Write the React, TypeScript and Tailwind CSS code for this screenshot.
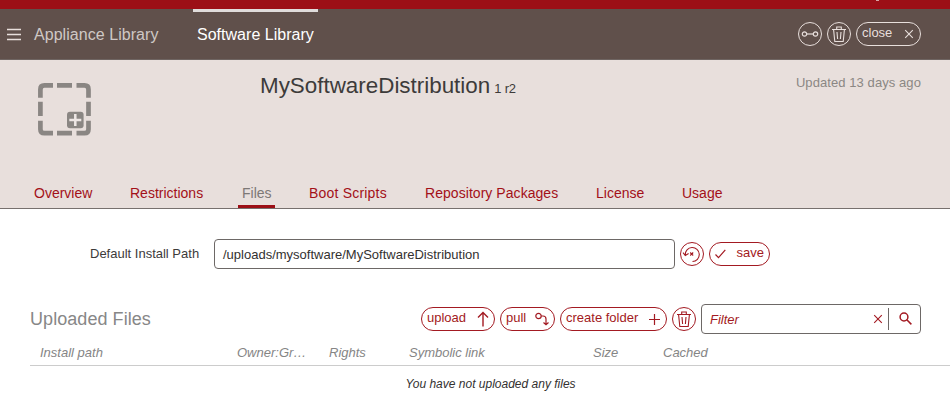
import type { ReactNode } from 'react';

const tabs = [
  { name: 'Overview', width: 'w-[66px]' },
  { name: 'Restrictions', width: 'w-[82px]' },
  { name: 'Files', width: 'w-[37px]' },
  { name: 'Boot Scripts', width: 'w-[86px] tracking-[0.2px]' },
  { name: 'Repository Packages', width: 'w-[141px] tracking-[0.05px]' },
  { name: 'License', width: 'w-[56px]' },
  { name: 'Usage', width: 'w-[48px]' },
];

function TrashIcon() {
  return (
    <svg width="16" height="18" viewBox="0 0 16 18" fill="none" stroke="currentColor" strokeWidth="1.1">
      <path d="M1 4.500h14M5.700 4.500V2h4.600v2.500M2.600 4.700l1.200 11.800h8.400l1.200-11.800M6 7l.6 7M10 7l-.6 7" />
    </svg>
  );
}

function CrossIcon() {
  return (
    <svg width="10" height="10" viewBox="0 0 10 10" fill="none" stroke="currentColor" strokeWidth="1.1">
      <path d="M1.200 1.200l7.600 7.600M8.800 1.200L1.200 8.800" />
    </svg>
  );
}

function Round({ children }: { children: ReactNode }) {
  return (
    <button className="flex h-6 w-6 shrink-0 items-center justify-center rounded-full border border-current">
      {children}
    </button>
  );
}

function Pill({ className, label, children }: { className: string; label: string; children: ReactNode }) {
  return (
    <button
      className={`flex h-6 shrink-0 items-center justify-between rounded-full border border-current text-[13px] leading-4 ${className}`}
    >
      <span className="pb-[3px]">{label}</span>
      {children}
    </button>
  );
}

export default function App() {
  return (
    <div className="h-[410px] w-[950px] overflow-hidden bg-white font-['Liberation_Sans',Arial,sans-serif] text-[13px] text-[#3d3b3a]">
      <div className="flex h-[9px] justify-end bg-[#9c0f16] pr-[71px]">
        <div className="h-px w-[3px] bg-[#d9a5a5]" />
      </div>
      <header className="flex h-[51px] items-start border-b border-[#6f6562] bg-[#60504b] text-[#e8dfdc]">
        <svg className="mt-[19px] ml-[7px] shrink-0" width="14" height="13" viewBox="0 0 14 13" stroke="currentColor" strokeWidth="1.700">
          <path d="M0 1.500h14M0 6.500h14M0 11.500h14" />
        </svg>
        <nav className="flex text-[16px] leading-[18px]">
          <a className="ml-[13px] w-[125px] pt-[17px] tracking-[0.050px] whitespace-nowrap text-[#cfc8c5]">Appliance Library</a>
          <a className="ml-[34px] w-[125px] border-t-[3px] border-[#e0dcdb] pt-[14px] pl-1 tracking-[0.020px] whitespace-nowrap text-white">
            Software Library
          </a>
        </nav>
        <div className="mt-[13px] mr-[29px] ml-auto flex gap-[5px]">
          <Round>
            <svg width="18" height="8" viewBox="0 0 18 8" fill="none" stroke="currentColor" strokeWidth="1.200">
              <circle cx="3.500" cy="4" r="2.200" />
              <circle cx="14.500" cy="4" r="2.200" />
              <path d="M5.700 4h6.600" />
            </svg>
          </Round>
          <Round><TrashIcon /></Round>
          <Pill className="w-[65px] pr-[6px] pl-[5px]" label="close"><CrossIcon /></Pill>
        </div>
      </header>

      <section className="flex h-[149px] flex-col justify-between border-b border-[#77706e] bg-[#e8dfdc]">
        <div className="flex items-start">
          <svg className="mt-[23px] ml-[38px] text-[#8a8683]" width="53" height="53" viewBox="0 0 53 53" fill="none" stroke="currentColor" strokeWidth="4.700">
            <path d="M2.400 14.700V6.400Q2.400 2.400 6.400 2.400H15M19 2.400h15M38.500 2.400h8q4 0 4 4v8.300M2.400 18.700V33M50.500 18.700V33M2.400 37.700V46.200q0 4 4 4H15M19 50.200h15M38.500 50.200h8q4 0 4-4V37.700" />
            <rect x="27.500" y="27.500" width="20" height="19.500" fill="#e8dfdc" stroke="none" />
            <rect x="29" y="28.800" width="16.600" height="16.500" rx="3" fill="currentColor" stroke="none" />
            <path d="M37.300 31v12M31.300 37h12" stroke="#eee7e5" strokeWidth="2.500" />
          </svg>
          <h1 className="mt-[12px] ml-[169px] text-[22.400px] leading-[27px] whitespace-nowrap">
            MySoftwareDistribution<span className="ml-1 text-[13px] tracking-[-0.200px]">1 r2</span>
          </h1>
          <span className="mt-[15px] mr-[29px] ml-auto text-[13px] leading-4 tracking-[0.080px] text-[#8b8784]">Updated 13 days ago</span>
        </div>
        <nav className="flex gap-[30px] pl-[30px] text-[14px] leading-4 text-[#a31018]">
          {tabs.map((tab) => (
            <a
              key={tab.name}
              className={`h-[23px] border-b-[3px] px-1 whitespace-nowrap ${tab.width} ${tab.name === 'Files' ? 'border-[#9c0f16] text-[#7d7876]' : 'border-transparent'}`}
            >
              {tab.name}
            </a>
          ))}
        </nav>
      </section>

      <div className="flex h-[90px] items-center text-[#a31a22]">
        <label className="ml-[90px] w-[124px] text-[#3d3b3a]">Default Install Path</label>
        <div className="flex h-[30px] w-[461px] items-center rounded border border-[#6d6866] pt-px pl-2 text-[#333130]">
          /uploads/mysoftware/MySoftwareDistribution
        </div>
        <div className="ml-[5px] flex gap-[5px]">
          <Round>
            <svg width="20" height="20" viewBox="0 0 20 20" fill="none" stroke="currentColor" strokeWidth="1.100">
              <path d="M3.300 11A7 7 0 1 1 10.500 17.500M1 8.700L3.300 11.500L6.600 9.500M8.200 8.500l3 3M11.200 8.500l-3 3" />
            </svg>
          </Round>
          <Pill className="w-[61px] flex-row-reverse pr-[5px] pl-[5px]" label="save">
            <svg width="11" height="10" viewBox="0 0 11 10" fill="none" stroke="currentColor" strokeWidth="1.200">
              <path d="M.5 5.500L3.500 8.700L10.300.8" />
            </svg>
          </Pill>
        </div>
      </div>

      <div className="flex h-[40px] items-center text-[#a31a22]">
        <h2 className="ml-[30px] w-[391px] text-[18px] leading-5 tracking-[0.060px] text-[#878787]">Uploaded Files</h2>
        <div className="flex gap-[5px]">
          <Pill className="w-[74px] pr-[5px] pl-[5px]" label="upload">
            <svg width="12" height="16" viewBox="0 0 12 16" fill="none" stroke="currentColor" strokeWidth="1.400">
              <path d="M6 15.500V1.500M1 6.500l5-5 5 5" />
            </svg>
          </Pill>
          <Pill className="w-[55px] pr-[4px] pl-[5px]" label="pull">
            <svg width="16" height="16" viewBox="0 0 16 16" fill="none" stroke="currentColor" strokeWidth="1.200">
              <circle cx="4.500" cy="5" r="2.700" />
              <path d="M7.200 5H9q3 0 3 3V13.500M9.500 11.500l2.500 2.300L14.500 11.500" />
            </svg>
          </Pill>
          <Pill className="w-[107px] pr-[6px] pl-[5px]" label="create folder">
            <svg width="11" height="11" viewBox="0 0 11 11" stroke="currentColor" strokeWidth="1.200">
              <path d="M5.500 0v11M0 5.500h11" />
            </svg>
          </Pill>
          <Round><TrashIcon /></Round>
        </div>
        <div className="ml-[5px] flex h-[30px] w-[220px] items-center rounded border border-[#6d6866] pr-[8px] pl-2">
          <span className="pt-px italic">Filter</span>
          <span className="ml-auto"><CrossIcon /></span>
          <span className="ml-[5px] h-[22px] w-px bg-[#6d6866]" />
          <svg className="mb-px ml-[10px]" width="13" height="13" viewBox="0 0 13 13" fill="none" stroke="currentColor" strokeWidth="1.500">
            <circle cx="5" cy="5" r="3.900" />
            <path d="M7.800 7.800l4.600 4.600" />
          </svg>
        </div>
      </div>

      <div className="ml-[30px] flex h-[27px] border-b border-[#cccccc] pt-[6px] pl-[10px] leading-4 whitespace-nowrap text-[#858585] italic">
        <span className="w-[197px]">Install path</span>
        <span className="w-[92px]">Owner:Gr…</span>
        <span className="w-[80px]">Rights</span>
        <span className="w-[184px]">Symbolic link</span>
        <span className="w-[70px]">Size</span>
        <span>Cached</span>
      </div>
      <p className="mt-[10px] ml-[31px] text-center text-[12px] leading-4 text-[#333130] italic">You have not uploaded any files</p>
    </div>
  );
}
